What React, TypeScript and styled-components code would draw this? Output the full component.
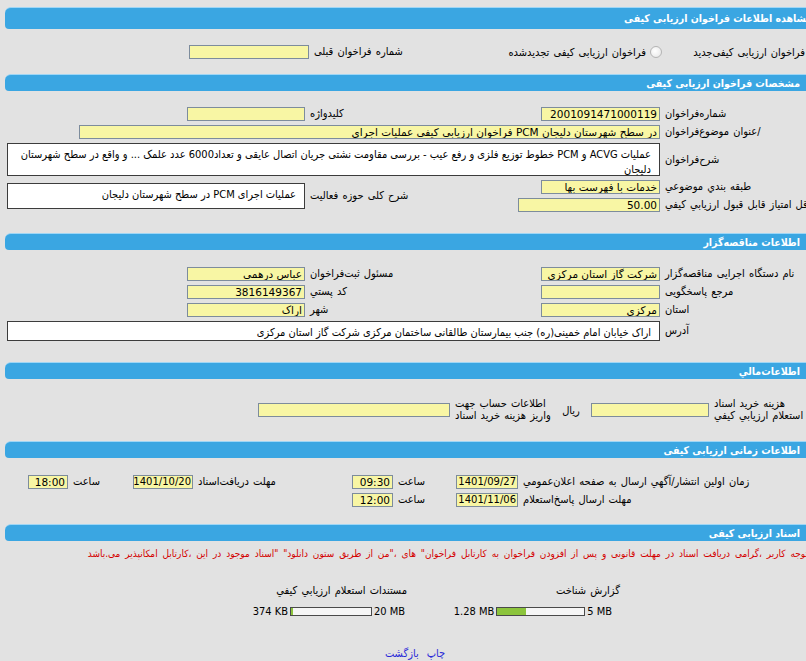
import styled, { createGlobalStyle } from "styled-components";

const GlobalStyle = createGlobalStyle`
  html, body {
    margin: 0;
    padding: 0;
    background: #e2e2e2;
    overflow: hidden;
  }
  body {
    font-family: Tahoma, "DejaVu Sans Condensed", "DejaVu Sans", sans-serif;
    font-size: 11px;
    word-spacing: 1px;
    color: #000;
  }
`;

const Page = styled.div`
  width: 820px;
  margin-left: 5px;
  padding-top: 7px;
  direction: rtl;
`;

const Bar = styled.div<{ $tall?: boolean; $pr?: number }>`
  height: ${({ $tall }) => ($tall ? 21 : 16)}px;
  line-height: ${({ $tall }) => ($tall ? 21 : 16)}px;
  background: #3aa6e2;
  border-top: 1px solid #9fd6f5;
  border-top-left-radius: 6px;
  border-bottom-left-radius: 4px;
  color: #fff;
  font-weight: bold;
  font-size: 10.5px;
  word-spacing: 0;
  padding-right: ${({ $pr }) => $pr ?? 25}px;
  white-space: nowrap;
  overflow: hidden;
`;

const FormGrid = styled.div<{ $cols: string; $top: number; $mb?: number }>`
  display: grid;
  grid-template-columns: ${({ $cols }) => $cols};
  row-gap: 4px;
  align-items: center;
  padding-top: ${({ $top }) => $top}px;
  margin-bottom: ${({ $mb }) => $mb ?? 21}px;
`;

const Choice = styled.div<{ $pr: number }>`
  display: flex;
  align-items: center;
  gap: 4px;
  padding-right: ${({ $pr }) => $pr}px;
  white-space: nowrap;
`;

const Radio = styled.span`
  width: 10px;
  height: 10px;
  border-radius: 50%;
  border: 1px solid #b4b4b4;
  background: radial-gradient(circle at 40% 40%, #ffffff, #e4e4e4);
  flex: none;
`;

const Label = styled.div<{ $rows?: number; $lh?: number }>`
  justify-self: end;
  text-align: left;
  white-space: nowrap;
  padding-left: 3px;
  line-height: ${({ $lh }) => $lh ?? 14}px;
  grid-row: ${({ $rows }) => ($rows ? `span ${$rows}` : "auto")};
`;

const Unit = styled.div`
  justify-self: center;
  padding-left: 6px;
`;

const Field = styled.div<{ $w: number; $span?: string; $small?: boolean }>`
  justify-self: start;
  grid-column: ${({ $span }) => $span ?? "auto"};
  box-sizing: border-box;
  width: ${({ $w }) => $w}px;
  height: 14px;
  margin-right: 2px;
  padding: 0 ${({ $small }) => ($small ? 1 : 2)}px;
  background: #f8f6a4;
  border: 1px solid #7d8c9c;
  font-family: "DejaVu Sans", sans-serif;
  font-size: ${({ $small }) => ($small ? 10 : 10.5)}px;
  line-height: 12px;
  word-spacing: 0;
  white-space: nowrap;
  overflow: hidden;
`;

const Box = styled.div<{ $h: number; $span?: string; $rows?: number }>`
  grid-column: ${({ $span }) => $span ?? "auto"};
  grid-row: ${({ $rows }) => ($rows ? `span ${$rows}` : "auto")};
  box-sizing: border-box;
  height: ${({ $h }) => $h}px;
  margin: 0 2px;
  padding: 3px 8px 0 4px;
  background: #fff;
  border: 1px solid #3c3c3c;
  line-height: 15px;
  word-spacing: 0;
`;

const Notice = styled.div`
  color: #d40000;
  font-size: 10px;
  word-spacing: 2px;
  padding: 5px 17px 0 0;
  white-space: nowrap;
  line-height: 16px;
`;

const DocsRow = styled.div`
  display: flex;
  padding: 22px 205px 0 0;
`;

const DocCell = styled.div`
  width: 213px;
  display: flex;
  flex-direction: column;
  align-items: flex-start;
  gap: 8px;
`;

const Meter = styled.div<{ $pr: number }>`
  display: flex;
  align-items: center;
  gap: 2px;
  padding-right: ${({ $pr }) => $pr}px;
`;

const Size = styled.span`
  direction: ltr;
  word-spacing: 0;
`;

const Track = styled.div<{ $w: number }>`
  width: ${({ $w }) => $w}px;
  height: 7px;
  border: 1px solid #4a4a4a;
  background: #f6f6f6;
  display: flex;
  direction: ltr;
`;

const Fill = styled.div`
  height: 100%;
  background: #8cc43c;
`;

const Links = styled.div`
  display: flex;
  justify-content: center;
  gap: 8px;
  padding-top: 29px;
`;

const Link = styled.a`
  color: #2a2ad8;
  text-decoration: none;
  cursor: pointer;
`;

const docs = [
  { title: "گزارش شناخت", used: "1.28 MB", max: "5 MB", pct: 33, bar: 87, pr: 8 },
  { title: "مستندات استعلام ارزيابي كيفي", used: "374 KB", max: "20 MB", pct: 2, bar: 80, pr: 2 },
];

const topCols = "161px 258px 95px 306px";
const mainCols = "163px 252px 103px 302px";
const moneyCols = "114px 120px 46px 93px 194px";
const timeCols = "305px 64px 61px 45px 155px 62px 63px 42px";

export default function App() {
  return (
    <>
      <GlobalStyle />
      <Page>
        <Bar $tall $pr={13}>مشاهده اطلاعات فراخوان ارزيابی کيفی</Bar>
        <FormGrid $cols={topCols} $top={16} $mb={15}>
          <Choice $pr={4}>
            <Radio />
            <span>فراخوان ارزيابی کيفی‌جديد</span>
          </Choice>
          <Choice $pr={2}>
            <Radio />
            <span>فراخوان ارزيابی کيفی تجديدشده</span>
          </Choice>
          <Label>شماره فراخوان قبلی</Label>
          <Field $w={120} />
        </FormGrid>

        <Bar>مشخصات فراخوان ارزيابی کيفی</Bar>
        <FormGrid $cols={mainCols} $top={16}>
          <Label>شماره‌فراخوان</Label>
          <Field $w={119}>2001091471000119</Field>
          <Label>کليدواژه</Label>
          <Field $w={118} />

          <Label>/عنوان موضوع‌فراخوان</Label>
          <Field $w={581} $span="2 / 5">
            در سطح شهرستان دليجان PCM فراخوان ارزيابي کيفي  عمليات اجرای
          </Field>

          <Label>شرح‌فراخوان</Label>
          <Box $h={33} $span="2 / 5">
            عمليات ACVG و PCM خطوط توزيع فلزی و رفع عيب - بررسی مقاومت نشتی جريان اتصال عايقی و تعداد6000 عدد علمک ... و واقع در سطح شهرستان
            دليجان
          </Box>

          <Label>طبقه بندي موضوعي</Label>
          <Field $w={119}>خدمات با فهرست بها</Field>
          <Label $rows={2}>شرح کلی حوزه فعاليت</Label>
          <Box $h={26} $rows={2}>
            عمليات اجرای PCM در سطح شهرستان دليجان
          </Box>

          <Label>حداقل امتياز قابل قبول ارزيابي کيفي</Label>
          <Field $w={142}>50.00</Field>
        </FormGrid>

        <Bar>اطلاعات مناقصه‌گزار</Bar>
        <FormGrid $cols={mainCols} $top={17}>
          <Label>نام دستگاه اجرايی مناقصه‌گزار</Label>
          <Field $w={119}>شرکت گاز استان مرکزی</Field>
          <Label>مسئول ثبت‌فراخوان</Label>
          <Field $w={118}>عباس  درهمی</Field>

          <Label>مرجع پاسخگويی</Label>
          <Field $w={119} />
          <Label>کد پستي</Label>
          <Field $w={118}>3816149367</Field>

          <Label>استان</Label>
          <Field $w={119}>مرکزی</Field>
          <Label>شهر</Label>
          <Field $w={118}>اراک</Field>

          <Label>آدرس</Label>
          <Box $h={20} $span="2 / 5">
            اراک خيابان امام خمينی(ره) جنب بيمارستان طالقانی ساختمان مرکزی شرکت گاز استان مرکزی
          </Box>
        </FormGrid>

        <Bar>اطلاعات‌مالي</Bar>
        <FormGrid $cols={moneyCols} $top={19} $mb={19}>
          <Label $lh={12}>
            هزينه خريد اسناد
            <br />
            استعلام ارزيابي کيفي
          </Label>
          <Field $w={118} />
          <Unit>ريال</Unit>
          <Label $lh={12}>
            اطلاعات حساب جهت
            <br />
            واريز هزينه خريد اسناد
          </Label>
          <Field $w={192} />
        </FormGrid>

        <Bar>اطلاعات زمانی ارزيابی کيفی</Bar>
        <FormGrid $cols={timeCols} $top={17} $mb={17}>
          <Label>زمان اولين انتشار/آگهي ارسال به صفحه اعلان‌عمومي</Label>
          <Field $w={62} $small>1401/09/27</Field>
          <Label>ساعت</Label>
          <Field $w={41}>09:30</Field>
          <Label>مهلت دريافت‌اسناد</Label>
          <Field $w={60} $small>1401/10/20</Field>
          <Label>ساعت</Label>
          <Field $w={40}>18:00</Field>

          <Label>مهلت ارسال پاسخ‌استعلام</Label>
          <Field $w={62} $small>1401/11/06</Field>
          <Label>ساعت</Label>
          <Field $w={41}>12:00</Field>
        </FormGrid>

        <Bar>اسناد ارزيابی کيفی</Bar>
        <Notice>
          توجه کاربر ،گرامی دريافت اسناد در مهلت قانونی و پس از افزودن فراخوان به کارتابل فراخوان" های ،"من از طريق ستون دانلود" "اسناد موجود در اين ،کارتابل امکانپذير می.باشد
        </Notice>
        <DocsRow>
          {docs.map((d) => (
            <DocCell key={d.title}>
              <span>{d.title}</span>
              <Meter $pr={d.pr}>
                <Size>{d.max}</Size>
                <Track $w={d.bar}>
                  <Fill style={{ width: `${d.pct}%` }} />
                </Track>
                <Size>{d.used}</Size>
              </Meter>
            </DocCell>
          ))}
        </DocsRow>
        <Links>
          <Link>چاپ</Link>
          <Link>بازگشت</Link>
        </Links>
      </Page>
    </>
  );
}
